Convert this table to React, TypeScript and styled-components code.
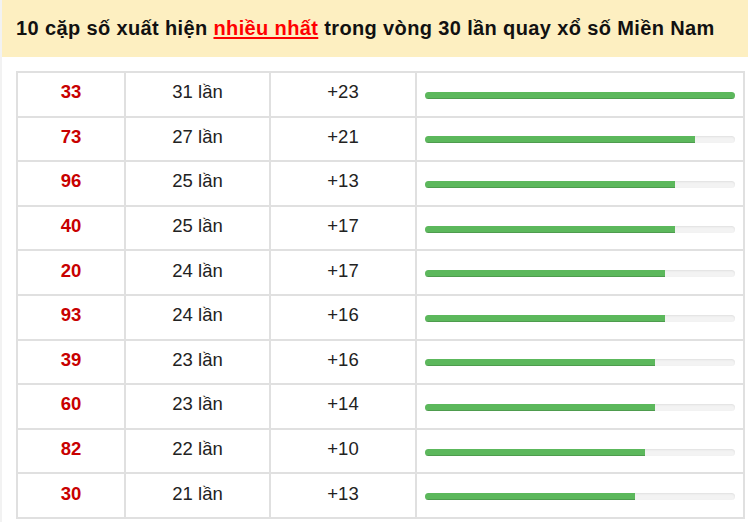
import React from "react";
import styled, { createGlobalStyle } from "styled-components";

const GlobalStyle = createGlobalStyle`
  body {
    margin: 0;
    background: #fff;
    font-family: "Liberation Sans", Arial, sans-serif;
  }
`;

const Page = styled.div`
  width: 748px;
  height: 522px;
  box-sizing: border-box;
  border-left: 2px solid #f2f2f2;
  overflow: hidden;
`;

const Header = styled.div`
  height: 57px;
  display: flex;
  align-items: center;
  padding-left: 14px;
  background: #fdefc1;
`;

const Title = styled.h2`
  margin: 0;
  font-size: 20px;
  letter-spacing: 0.37px;
  font-weight: bold;
  color: #111;
  white-space: nowrap;
`;

const Hot = styled.span`
  color: #f00;
  text-decoration: underline;
  text-decoration-thickness: 2px;
  text-underline-offset: 2px;
`;

const Table = styled.table`
  margin: 14px 0 0 14px;
  width: 729px;
  border-collapse: collapse;
  table-layout: fixed;
`;

const Row = styled.tr`
  height: 44.6px;
`;

const Cell = styled.td`
  border: 2px solid #e0e0e0;
  padding: 0 8px 4px;
  text-align: center;
  font-size: 18.5px;
  color: #222;
`;

const NumberCell = styled(Cell)`
  color: #c80000;
  font-weight: bold;
`;

const Track = styled.div`
  height: 7px;
  margin-top: 6px;
  border-radius: 4px;
  background: #f3f3f3;
  box-shadow: inset 0 1px 2px rgba(0, 0, 0, 0.08);
  overflow: hidden;
`;

const Fill = styled.div`
  height: 100%;
  background: #5cb85c;
  box-shadow: inset 0 -1px 0 rgba(0, 0, 0, 0.15);
`;

const rows = [
  { pair: "33", count: 31, gap: 23 },
  { pair: "73", count: 27, gap: 21 },
  { pair: "96", count: 25, gap: 13 },
  { pair: "40", count: 25, gap: 17 },
  { pair: "20", count: 24, gap: 17 },
  { pair: "93", count: 24, gap: 16 },
  { pair: "39", count: 23, gap: 16 },
  { pair: "60", count: 23, gap: 14 },
  { pair: "82", count: 22, gap: 10 },
  { pair: "30", count: 21, gap: 13 },
];

const max = Math.max(...rows.map((r) => r.count));

export default function App() {
  return (
    <Page>
      <GlobalStyle />
      <Header>
        <Title>
          10 cặp số xuất hiện <Hot>nhiều nhất</Hot> trong vòng 30 lần quay xổ
          số Miền Nam
        </Title>
      </Header>
      <Table>
        <colgroup>
          <col style={{ width: 108 }} />
          <col style={{ width: 145 }} />
          <col style={{ width: 146 }} />
          <col />
        </colgroup>
        <tbody>
          {rows.map((r) => (
            <Row key={r.pair}>
              <NumberCell>{r.pair}</NumberCell>
              <Cell>{r.count} lần</Cell>
              <Cell>+{r.gap}</Cell>
              <Cell>
                <Track>
                  <Fill style={{ width: `${(r.count / max) * 100}%` }} />
                </Track>
              </Cell>
            </Row>
          ))}
        </tbody>
      </Table>
    </Page>
  );
}
